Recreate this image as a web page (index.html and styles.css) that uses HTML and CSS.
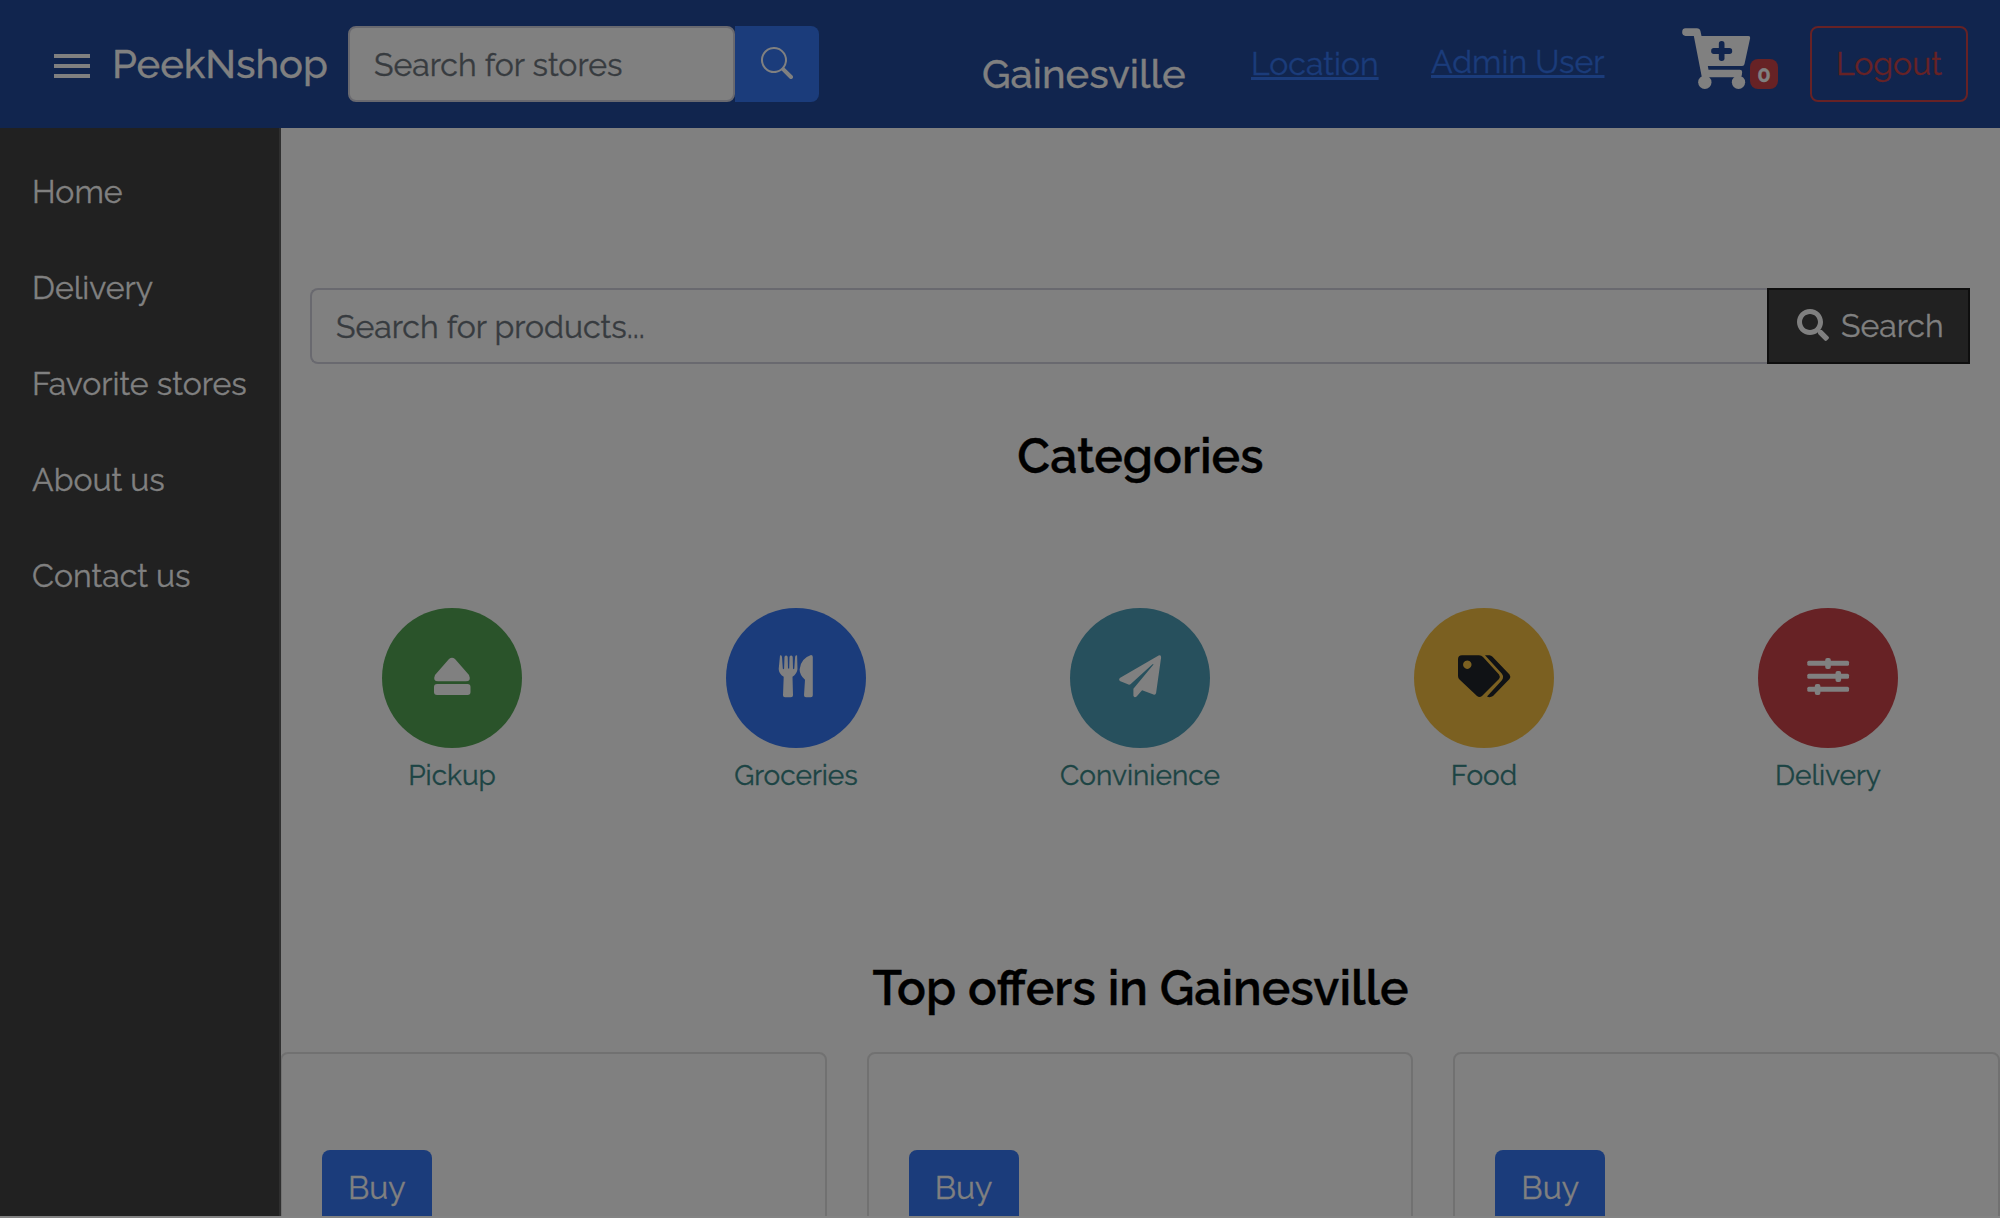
FILE: index.html
```html
<!DOCTYPE html>
<html lang="en">
<head>
<meta charset="utf-8">
<title>PeekNshop</title>
<link rel="stylesheet" href="styles.css">
</head>
<body>
<div class="app">
  <header class="topbar">
    <div class="menu"><span></span><span></span><span></span></div>
    <div class="brand">PeekNshop</div>
    <div class="store-search">
      <div class="store-input">Search for stores</div>
      <div class="store-btn">
        <svg width="32" height="32" viewBox="0 0 16 16" fill="currentColor"><path d="M11.742 10.344a6.5 6.5 0 1 0-1.397 1.398h-.001c.03.04.062.078.098.115l3.85 3.85a1 1 0 0 0 1.415-1.414l-3.85-3.85a1.007 1.007 0 0 0-.115-.1zM12 6.5a5.5 5.5 0 1 1-11 0 5.5 5.5 0 0 1 11 0z"/></svg>
      </div>
    </div>
    <div class="city">Gainesville</div>
    <a class="link location">Location</a>
    <a class="link user">Admin User</a>
    <div class="cart">
      <svg width="69" height="61" viewBox="0 0 206 183"><g fill="#808080"><path d="M10 1H44q9 0 11 9l3 14H199q6 0 5 6l-17 78q-1 6-7 6H77l2 11H173q7 0 7 7l-1 10q-1 6-8 6H59L35 24H10Q0 23 0 13Q0 1 10 1z"/><circle cx="68" cy="163" r="20"/><circle cx="169" cy="163" r="20"/></g><g fill="#11254e"><rect x="87" y="60" width="63" height="18" rx="8"/><rect x="110" y="39" width="17" height="60" rx="8"/></g></svg>
      <span class="badge">0</span>
    </div>
    <div class="logout">Logout</div>
  </header>
  <div class="body">
    <nav class="sidebar">
      <a>Home</a>
      <a>Delivery</a>
      <a>Favorite stores</a>
      <a>About us</a>
      <a>Contact us</a>
    </nav>
    <main class="main">
      <div class="product-search">
        <div class="product-input">Search for products...</div>
        <div class="product-btn">
          <svg width="32" height="32" viewBox="0 0 512 512" fill="currentColor"><path d="M505 442.7L405.3 343c-4.5-4.5-10.6-7-17-7H372c27.6-35.3 44-79.7 44-128C416 93.1 322.9 0 208 0S0 93.1 0 208s93.1 208 208 208c48.3 0 92.7-16.4 128-44v16.3c0 6.4 2.5 12.5 7 17l99.7 99.7c9.4 9.4 24.6 9.4 33.9 0l28.3-28.3c9.4-9.4 9.4-24.6.1-34zM208 336c-70.7 0-128-57.2-128-128 0-70.7 57.2-128 128-128 70.7 0 128 57.2 128 128 0 70.7-57.2 128-128 128z"/></svg>
          <span>Search</span>
        </div>
      </div>
      <h2 class="heading cats-title">Categories</h2>
      <div class="categories">
        <div class="category">
          <svg class="circle green" viewBox="0 0 140 140"><path d="M67 51q3-2.600 6 0L87 67q2.500 6.300-3 6.300H56q-5.500 0-3-6.300z"/><rect x="52" y="76" width="36.500" height="11" rx="3"/></svg>
          <span>Pickup</span>
        </div>
        <div class="category">
          <svg class="circle blue" viewBox="0 0 140 140"><path d="M54 47.500q1.800-.7 2 1.500l.8 11.500q.7 1.500 1.300 0l.4-11.800q1.500-2.500 3.200 0l.3 11.800h1.200l.3-11.800q1.600-2.500 3.200 0l.3 11.800q.7 1.500 1.300 0l.8-11.500q.2-2.200 2-1.500L71.500 61q-.5 5-5 7.700L67 87.300q0 2-2 2h-6q-2 0-2-2l.7-18.600Q52.800 66 52.700 61z"/><path d="M85 47q1.800 0 1.800 2v38.300q0 2-2 2H80q-2 0-2-2l1-15.500Q73.600 67 73.600 61.500 74.500 50.500 85 47z"/></svg>
          <span>Groceries</span>
        </div>
        <div class="category">
          <svg class="circle teal" viewBox="0 0 140 140"><path d="M88.600 47.500q2.600-1 2.500 2l-5 35.500q-.6 2.300-2.600 1.500l-11.400-4.200-5.500 6.200q-2.500 1.600-3.200-.8v-7L83.500 56.500q-.3-1-1.300 0L60.500 76.300q-1 .8-2 .3L49.800 73q-1.500-1.500 0-3z"/></svg>
          <span>Convinience</span>
        </div>
        <div class="category">
          <svg class="circle yellow" viewBox="0 0 140 140"><path fill-rule="evenodd" d="M48 47.300H65q2.500 0 4 1.700L85 66.500q1.600 2.200 0 4.500L68 88q-2.500 2-5 0L45.500 71.500Q44 70 44 68V51.300q0-4 4-4zm5.300 5.200a4.200 4.200 0 1 0 .01 0z"/><path d="M71 47.300h4.500q1.500 0 3 1.500L95.500 66.500q1.600 2.200 0 4.500L79 88q-3 2-6 .5L87.700 72.500q2.800-3.800 0-7z"/></svg>
          <span>Food</span>
        </div>
        <div class="category">
          <svg class="circle red" viewBox="0 0 140 140"><g><rect x="49.300" y="52.800" width="41.700" height="5" rx="1.500"/><rect x="49.300" y="65.800" width="41.700" height="5" rx="1.500"/><rect x="49.300" y="78.800" width="41.700" height="5" rx="1.500"/><rect x="67.200" y="50" width="5.600" height="11" rx="2"/><rect x="77.500" y="63" width="5.600" height="11" rx="2"/><rect x="56.800" y="76" width="5.600" height="11" rx="2"/></g></svg>
          <span>Delivery</span>
        </div>
      </div>
      <h2 class="heading offers-title">Top offers in Gainesville</h2>
      <div class="offers">
        <div class="card"><div class="buy">Buy</div></div>
        <div class="card"><div class="buy">Buy</div></div>
        <div class="card"><div class="buy">Buy</div></div>
      </div>
    </main>
  </div>
</div>
</body>
</html>
```
FILE: styles.css
```css
* { box-sizing: border-box; }
body {
  margin: 0;
  height: 1218px;
  overflow: hidden;
  background: #838383;
  color: #808080;
  font-family: Raleway, Lato, "Open Sans", sans-serif;
  font-size: 32px;
  line-height: 48px;
  white-space: nowrap;
  -webkit-text-stroke: 0.35px currentColor;
}
svg { display: block; flex: none; }
.app { height: 1216px; overflow: hidden; background: #808080; }

.topbar { display: flex; align-items: flex-start; height: 128px; background: #11254e; }
.menu { display: flex; flex-direction: column; gap: 6px; width: 36px; margin: 54px 0 0 54px; }
.menu span { height: 4px; background: #808080; }
.brand { width: 237px; margin-top: 40px; padding-left: 22px; font-size: 40px; font-weight: 500; }
.store-search { display: flex; height: 76px; margin-top: 26px; }
.store-input { width: 387px; margin-left: 21px; padding: 13px 24px 0; border: 2px solid #69696f; border-radius: 8px; background: #808080; color: #373b3f; }
.store-btn { display: flex; align-items: center; justify-content: center; width: 84px; border-radius: 0 8px 8px 0; background: #1b3c7b; }
.store-btn svg { margin-top: -2px; }
.city { width: 269px; margin: 50px 0 0 163px; font-size: 40px; font-weight: 500; }
.link { color: #1b3c7b; text-decoration: underline; text-decoration-thickness: 3px; text-underline-offset: 2px; text-decoration-skip-ink: none; }
.location { width: 180px; margin-top: 40px; }
.user { width: 251px; margin-top: 38px; }
.cart { display: flex; align-items: flex-end; width: 128px; height: 61px; margin-top: 28px; }
.badge { width: 28px; height: 30px; margin-left: -1px; border-radius: 8px; background: #672225; font-size: 22px; font-weight: 700; line-height: 30px; text-align: center; }
.logout { width: 158px; height: 76px; margin-top: 26px; padding: 12px 0 0 24px; border: 2px solid #672225; border-radius: 8px; color: #672225; }

.body { display: flex; height: 1088px; }
.sidebar { position: relative; z-index: 1; width: 281px; flex: none; padding-top: 16px; border-right: 2px solid #2f2f2f; background: #212121; }
.sidebar a { display: block; height: 96px; padding-left: 32px; line-height: 96px; }

.main { flex: 1; min-width: 0; }
.product-search { display: flex; height: 76px; margin: 160px 30px 0 29px; }
.product-input { flex: 1; padding: 13px 24px 0; border: 2px solid #69696f; border-right: 0; border-radius: 8px 0 0 8px; color: #373b3f; }
.product-btn { display: flex; gap: 12px; width: 203px; padding: 12px 0 0 28px; border: 2px solid #0e0e0e; background: #212121; }
.product-btn svg { margin-top: 7px; }
.heading { margin: 0; color: #000; font-size: 48px; font-weight: 600; line-height: 58px; text-align: center; }
.cats-title { margin-top: 63px; }
.categories { display: grid; grid-template-columns: repeat(5, 344px); margin: 123px 0 0 -1px; }
.category { display: flex; flex-direction: column; align-items: center; color: #1c4444; font-size: 28px; line-height: 42px; }
.circle { width: 140px; height: 140px; margin-bottom: 7px; border-radius: 50%; fill: #808080; }
.green { background: #2a532a; }
.blue { background: #1b3c7b; }
.teal { background: #27505d; }
.yellow { background: #7b6021; fill: #101215; }
.red { background: #672225; }
.offers-title { margin-top: 162px; }
.offers { display: grid; grid-template-columns: repeat(3, 1fr); gap: 40px; margin: 35px 0 0 -1px; }
.card { height: 220px; padding: 96px 0 0 40px; border: 2px solid #717171; border-radius: 8px; }
.buy { width: 110px; height: 76px; padding: 14px 0 0 26px; border-radius: 8px; background: #1b3c7b; }
```
